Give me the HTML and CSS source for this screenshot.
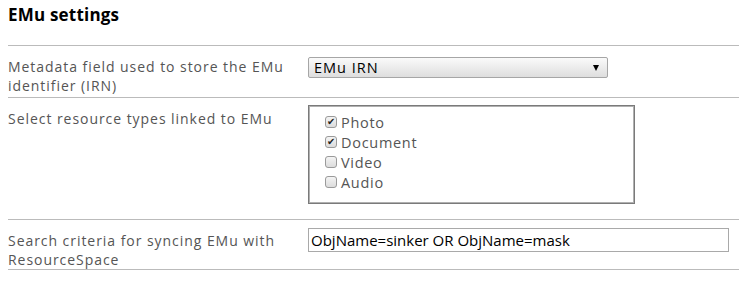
FILE: index.html
```html
<!DOCTYPE html>
<html lang="en">
<head>
    <meta charset="UTF-8">
    <meta name="viewport" content="width=device-width, initial-scale=1.0">
    <title>EMu settings</title>
    <link rel="stylesheet" href="styles.css">
</head>
<body>
    <h1>EMu settings</h1>

    <div class="question-list">
        <div class="question">
            <label class="question-label" for="emuIrn">Metadata field used to store the EMu identifier (IRN)</label>
            <div class="select-box" id="emuIrn">
                <span>EMu IRN</span>
                <span class="select-arrow"></span>
            </div>
        </div>

        <div class="question question-types">
            <label class="question-label">Select resource types linked to EMu</label>
            <div class="checkbox-list">
                <label class="checkbox-item"><span class="checkbox checked"></span>Photo</label>
                <label class="checkbox-item"><span class="checkbox checked"></span>Document</label>
                <label class="checkbox-item"><span class="checkbox"></span>Video</label>
                <label class="checkbox-item"><span class="checkbox"></span>Audio</label>
            </div>
        </div>

        <div class="question question-search">
            <label class="question-label" for="searchCriteria">Search criteria for syncing EMu with ResourceSpace</label>
            <input type="text" class="text-input" id="searchCriteria" value="ObjName=sinker OR ObjName=mask">
        </div>
    </div>
</body>
</html>
```

FILE: styles.css
```css
body {
    font-family: "Open Sans", Arial, sans-serif;
    font-size: 14px;
    color: #555;
    margin: 0 0 0 8px;
    background: #fff;
}
h1 {
    font-size: 17px;
    font-weight: bold;
    color: #000;
    margin: 0;
    padding-top: 3px;
    height: 42px;
    line-height: 24px;
    letter-spacing: 0.2px;
}
.question-list {
    border-top: 1px solid #bbb;
}
.question {
    display: flex;
    align-items: flex-start;
    border-bottom: 1px solid #bbb;
    height: 51px;
}
.question-types {
    height: 121px;
}
.question-search {
    height: 49px;
}
.question-label {
    width: 300px;
    line-height: 18.5px;
    padding-top: 12px;
    letter-spacing: 0.95px;
}
.select-box {
    display: flex;
    align-items: center;
    justify-content: space-between;
    box-sizing: border-box;
    width: 300px;
    height: 21px;
    margin-top: 11px;
    padding: 0 8px 0 5px;
    border: 1px solid #a6a6a6;
    border-radius: 2px;
    background: linear-gradient(#fafafa, #dedede);
    color: #000;
    font-size: 14.5px;
    letter-spacing: 1px;
}
.select-arrow {
    width: 0;
    height: 0;
    border-left: 3.5px solid transparent;
    border-right: 3.5px solid transparent;
    border-top: 6px solid #000;
}
.checkbox-list {
    box-sizing: border-box;
    width: 327px;
    height: 99px;
    margin-top: 7px;
    padding: 6px 0 0 16px;
    border: 1px solid #7a7a7a;
    box-shadow: inset 0 0 0 1px #b0b0b0;
}
.checkbox-item {
    display: flex;
    align-items: center;
    height: 20px;
    font-size: 14.5px;
    letter-spacing: 0.7px;
}
.checkbox {
    position: relative;
    box-sizing: border-box;
    width: 12px;
    height: 12px;
    margin-right: 4px;
    border: 1px solid #9a9a9a;
    border-radius: 3px;
    background: linear-gradient(#f4f4f4, #dcdcdc);
}
.checkbox.checked::after {
    content: "\2714";
    position: absolute;
    left: 1px;
    top: -3px;
    font-size: 10px;
    color: #222;
    letter-spacing: 0;
}
.text-input {
    box-sizing: border-box;
    width: 421px;
    height: 24px;
    margin: 8px 0 0;
    padding: 0 2px;
    border: 1px solid #a9a9a9;
    font-family: "Open Sans", Arial, sans-serif;
    font-size: 15px;
    color: #000;
    outline: none;
}
```
